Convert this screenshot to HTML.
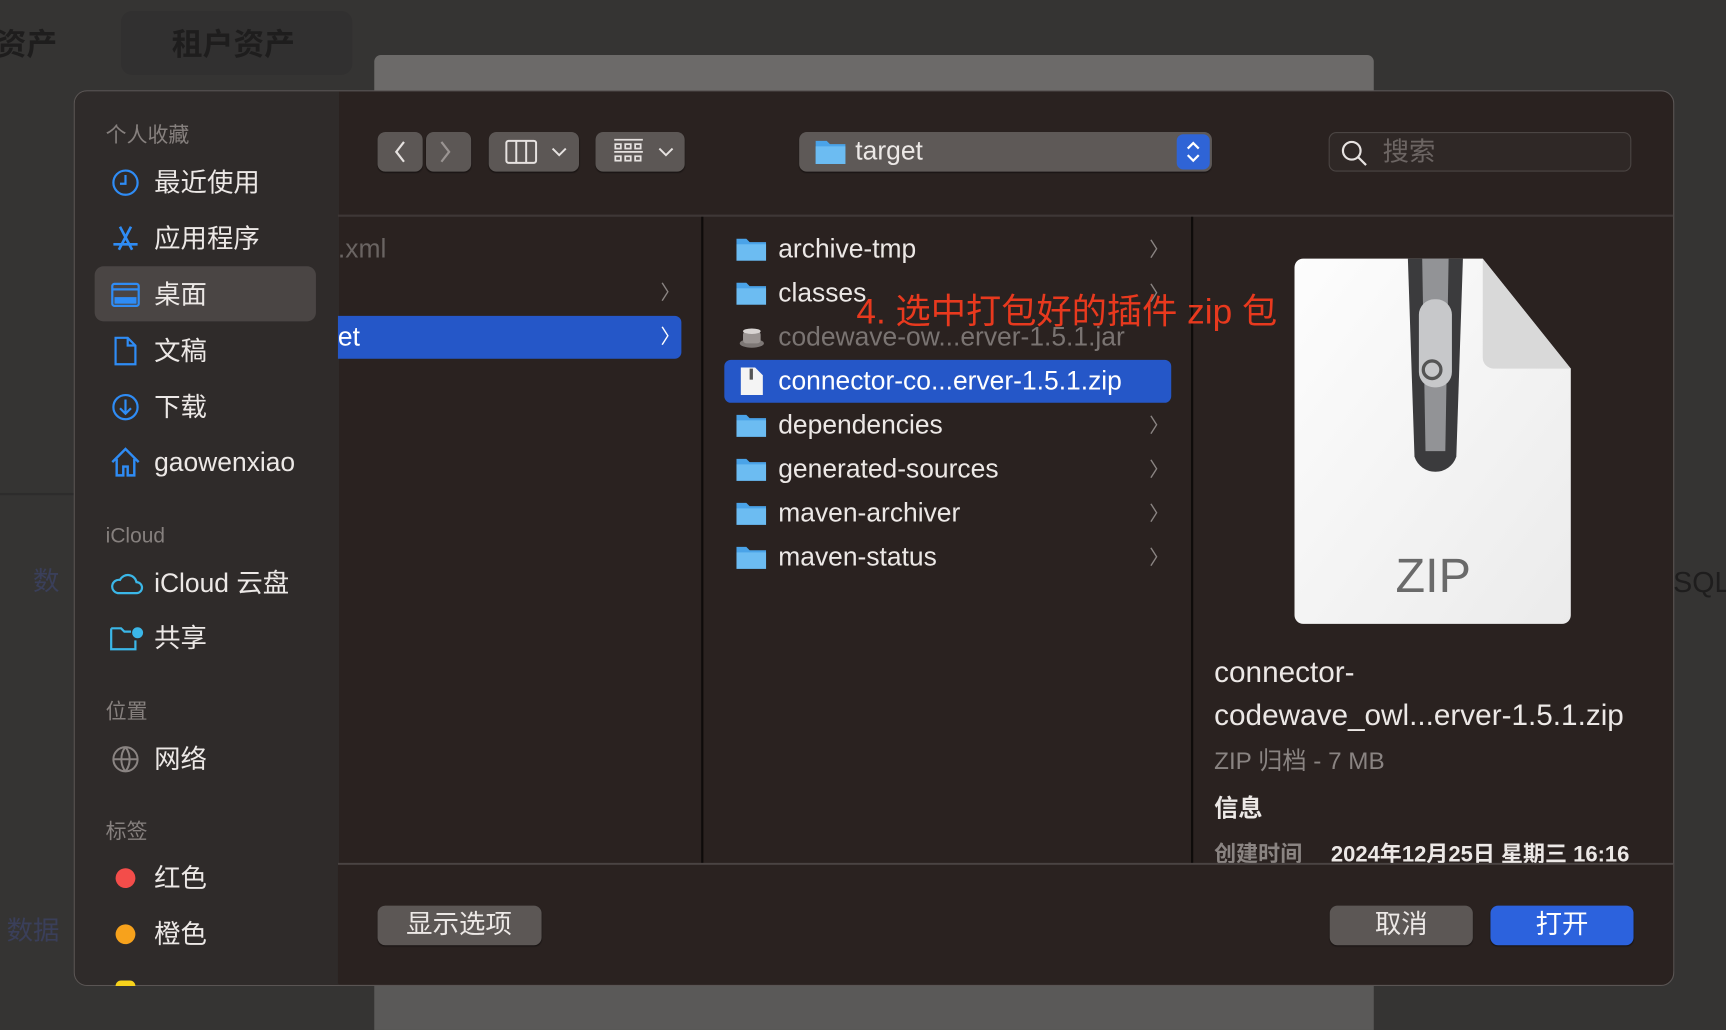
<!DOCTYPE html>
<html><head><meta charset="utf-8"><style>
*{margin:0;padding:0;box-sizing:border-box}
html,body{width:1726px;height:1030px;overflow:hidden;background:#353433}
#s{position:absolute;left:0;top:0;width:1568px;height:936px;transform:scale(1.10077,1.1004);transform-origin:0 0;font-family:"Liberation Sans","Noto Sans CJK SC",sans-serif;color:#e8e4e2}
.a{position:absolute}
.t{position:absolute;white-space:nowrap;line-height:1;margin-top:1px}
.hd{font-size:19px;color:#86807e}
.it{font-size:24px;color:#ece8e6;left:140px}
.btn{position:absolute;background:#5c5755;border-radius:7px;box-shadow:0 1px 1px rgba(0,0,0,.4)}
.row{position:absolute;left:670px;font-size:24px;color:#ece8e6}
.fold{position:absolute;left:669px;width:27px;height:22px}
.chev{position:absolute;left:1044px;font-size:18px;color:#8a8482}
</style></head><body><div id="s">
<div class="t" style="left:-4px;top:26px;font-size:28px;color:#1e1d1d;font-weight:bold">资产</div>
<div class="a" style="left:110px;top:10px;width:210px;height:58px;background:#313030;border-radius:10px"></div>
<div class="t" style="left:156px;top:26px;font-size:28px;color:#1e1d1d;font-weight:bold">租户资产</div>
<div class="a" style="left:340px;top:50px;width:908px;height:40px;background:#6c6a69;border-radius:6px 6px 0 0"></div>
<div class="a" style="left:340px;top:890px;width:908px;height:46px;background:#5a5958"></div>
<div class="a" style="left:0;top:448px;width:70px;height:2px;background:#2d2c2c"></div>
<div class="t" style="left:30px;top:516px;font-size:24px;color:#3a3f5a">数</div>
<div class="t" style="left:6px;top:834px;font-size:24px;color:#3a3f5a">数据</div>
<div class="t" style="left:1520px;top:515px;font-size:26px;color:#1e1d1d">SQL</div>
<div class="a" style="left:67px;top:82px;width:1454px;height:814px;background:#2a2220;border:1px solid #5a5554;border-radius:12px;overflow:hidden">
 <div class="a" style="left:0;top:0;width:240px;height:814px;background:#2f2b2a"></div>
</div>
<div class="t hd" style="left:96px;top:113px">个人收藏</div>
<div class="a" style="left:86px;top:242px;width:201px;height:50px;background:#4a4544;border-radius:8px"></div>
<svg class="a" style="left:100px;top:152px" width="28" height="28" viewBox="0 0 28 28" fill="none" stroke="#2f8cf5" stroke-width="2"><circle cx="14" cy="14" r="11"/><path d="M14 7v8h-5"/></svg>
<div class="t it" style="top:154px">最近使用</div>
<svg class="a" style="left:100px;top:203px" width="28" height="28" viewBox="0 0 28 28" fill="none" stroke="#2f8cf5" stroke-width="2.4"><path d="M9 3l11 21M19 3L8 24M3 19h22"/></svg>
<div class="t it" style="top:205px">应用程序</div>
<svg class="a" style="left:100px;top:255px" width="28" height="26" viewBox="0 0 28 26" fill="none" stroke="#2f8cf5" stroke-width="2"><rect x="2" y="3" width="24" height="20" rx="2"/><path d="M2 8h24"/><rect x="5" y="16" width="18" height="4" fill="#2f8cf5"/></svg>
<div class="t it" style="top:256px">桌面</div>
<svg class="a" style="left:103px;top:305px" width="22" height="28" viewBox="0 0 22 28" fill="none" stroke="#2f8cf5" stroke-width="2"><path d="M2 2h11l7 7v17H2z M13 2v7h7"/></svg>
<div class="t it" style="top:307px">文稿</div>
<svg class="a" style="left:100px;top:356px" width="28" height="28" viewBox="0 0 28 28" fill="none" stroke="#2f8cf5" stroke-width="2"><circle cx="14" cy="14" r="11"/><path d="M14 7v13M9 15l5 5 5-5"/></svg>
<div class="t it" style="top:358px">下载</div>
<svg class="a" style="left:99px;top:405px" width="30" height="30" viewBox="0 0 30 30" fill="none" stroke="#2f8cf5" stroke-width="2.2"><path d="M3 15L15 3l12 12M7 12v15h6v-8h4v8h6V12"/></svg>
<div class="t it" style="top:408px">gaowenxiao</div>
<div class="t hd" style="left:96px;top:477px">iCloud</div>
<svg class="a" style="left:99px;top:518px" width="32" height="24" viewBox="0 0 32 24" fill="none" stroke="#3bb7e8" stroke-width="2"><path d="M8 21h17a5 5 0 0 0 0-10 8 8 0 0 0-15-2 6 6 0 0 0-2 12z"/></svg>
<div class="t it" style="top:518px">iCloud 云盘</div>
<svg class="a" style="left:99px;top:567px" width="32" height="26" viewBox="0 0 32 26" fill="none" stroke="#3bb7e8" stroke-width="2"><path d="M2 4h9l3 3h6M2 4v19h22v-8"/><circle cx="26" cy="8" r="4" fill="#3bb7e8"/></svg>
<div class="t it" style="top:568px">共享</div>
<div class="t hd" style="left:96px;top:637px">位置</div>
<svg class="a" style="left:101px;top:677px" width="26" height="26" viewBox="0 0 26 26" fill="none" stroke="#8a8482" stroke-width="1.8"><circle cx="13" cy="13" r="11"/><path d="M2 13h22M13 2c-5 6-5 16 0 22M13 2c5 6 5 16 0 22"/></svg>
<div class="t it" style="top:678px">网络</div>
<div class="t hd" style="left:96px;top:746px">标签</div>
<div class="a" style="left:105px;top:789px;width:18px;height:18px;border-radius:50%;background:#f34d4a"></div>
<div class="t it" style="top:786px">红色</div>
<div class="a" style="left:105px;top:840px;width:18px;height:18px;border-radius:50%;background:#f7a21c"></div>
<div class="t it" style="top:837px">橙色</div>
<div class="a" style="left:105px;top:891px;width:18px;height:5px;border-radius:9px 9px 0 0;background:#f7d21c"></div>
<div class="btn" style="left:343px;top:120px;width:41px;height:36px"></div>
<div class="btn" style="left:387px;top:120px;width:41px;height:36px"></div>
<svg class="a" style="left:355px;top:126px" width="60" height="24" fill="none" stroke-width="2"><path d="M12 3l-7 9 7 9" stroke="#e6e2e0"/><path d="M46 3l7 9-7 9" stroke="#9a9492"/></svg>
<div class="btn" style="left:444px;top:120px;width:82px;height:36px"></div>
<svg class="a" style="left:458px;top:126px" width="62" height="24" fill="none" stroke="#e6e2e0" stroke-width="1.8"><rect x="2" y="2" width="27" height="20" rx="2"/><path d="M11 2v20M20 2v20M44 9l6 6 6-6"/></svg>
<div class="btn" style="left:541px;top:120px;width:81px;height:36px"></div>
<svg class="a" style="left:556px;top:124px" width="60" height="28" fill="none" stroke="#e6e2e0" stroke-width="1.6"><path d="M2 3h26M2 14h26"/><rect x="3" y="7" width="5" height="4"/><rect x="12" y="7" width="5" height="4"/><rect x="21" y="7" width="5" height="4"/><rect x="3" y="18" width="5" height="4"/><rect x="12" y="18" width="5" height="4"/><rect x="21" y="18" width="5" height="4"/><path d="M43 11l6 6 6-6" stroke-width="1.8"/></svg>
<div class="btn" style="left:726px;top:120px;width:375px;height:36px;background:#5e5957"></div>
<svg class="a" style="left:740px;top:125px" width="29" height="25"><path d="M1 3h10l3 3h14v18H1z" fill="#4aa3e8"/><rect x="1" y="8" width="27" height="16" fill="#6cbcf2"/></svg>
<div class="t" style="left:777px;top:125px;font-size:24px;color:#ece8e6">target</div>
<div class="a" style="left:1069px;top:122px;width:30px;height:32px;background:#2f64d6;border-radius:6px"></div>
<svg class="a" style="left:1075px;top:125px" width="18" height="26" fill="none" stroke="#fff" stroke-width="2"><path d="M4 10l5-5 5 5M4 16l5 5 5-5"/></svg>
<div class="a" style="left:1207px;top:120px;width:275px;height:36px;background:#2f2826;border:1px solid #4b4543;border-radius:7px"></div>
<svg class="a" style="left:1217px;top:126px" width="28" height="26" fill="none" stroke="#e6e2e0" stroke-width="2"><circle cx="11" cy="11" r="8"/><path d="M17 17l7 7"/></svg>
<div class="t" style="left:1256px;top:126px;font-size:24px;color:#6c6563">搜索</div>
<div class="a" style="left:307px;top:195px;width:1213px;height:2px;background:#3e3736"></div>
<div class="a" style="left:637px;top:197px;width:2px;height:588px;background:#0e0b0a"></div>
<div class="a" style="left:1082px;top:197px;width:2px;height:588px;background:#0e0b0a"></div>
<div class="t" style="left:307px;top:214px;font-size:24px;color:#6a6462">.xml</div>
<div class="chev t" style="left:600px;top:256px">〉</div>
<div class="a" style="left:307px;top:287px;width:312px;height:39px;background:#2557c8;border-radius:0 6px 6px 0"></div>
<div class="t" style="left:307px;top:294px;font-size:24px;color:#fff">et</div>
<div class="t" style="left:600px;top:296px;font-size:18px;color:#fff">〉</div>
<div class="a" style="left:658px;top:327px;width:406px;height:39px;background:#2557c8;border-radius:6px"></div>
<svg class="fold" style="top:215px"><path d="M0 2h9l3 3h15v17H0z" fill="#4aa3e8"/><rect x="0" y="7" width="27" height="15" fill="#6cbcf2"/></svg>
<div class="t row" style="left:707px;top:214px">archive-tmp</div><div class="t chev" style="top:217px">〉</div>
<svg class="fold" style="top:255px"><path d="M0 2h9l3 3h15v17H0z" fill="#4aa3e8"/><rect x="0" y="7" width="27" height="15" fill="#6cbcf2"/></svg>
<div class="t row" style="left:707px;top:254px">classes</div><div class="t chev" style="top:257px">〉</div>
<svg class="a" style="left:671px;top:295px" width="24" height="22"><ellipse cx="12" cy="17" rx="11" ry="4" fill="#7d7775"/><rect x="4" y="6" width="16" height="11" rx="3" fill="#9a9492"/><ellipse cx="12" cy="6" rx="8" ry="2.5" fill="#d8d4d2"/></svg>
<div class="t row" style="left:707px;top:294px;color:#7a7472">codewave-ow...erver-1.5.1.jar</div>
<svg class="a" style="left:672px;top:333px" width="22" height="27"><path d="M1 1h13l7 7v18H1z" fill="#f4f4f4"/><rect x="9" y="2" width="3" height="10" fill="#555"/></svg>
<div class="t row" style="left:707px;top:334px;color:#fff">connector-co...erver-1.5.1.zip</div>
<svg class="fold" style="top:375px"><path d="M0 2h9l3 3h15v17H0z" fill="#4aa3e8"/><rect x="0" y="7" width="27" height="15" fill="#6cbcf2"/></svg>
<div class="t row" style="left:707px;top:374px">dependencies</div><div class="t chev" style="top:377px">〉</div>
<svg class="fold" style="top:415px"><path d="M0 2h9l3 3h15v17H0z" fill="#4aa3e8"/><rect x="0" y="7" width="27" height="15" fill="#6cbcf2"/></svg>
<div class="t row" style="left:707px;top:414px">generated-sources</div><div class="t chev" style="top:417px">〉</div>
<svg class="fold" style="top:455px"><path d="M0 2h9l3 3h15v17H0z" fill="#4aa3e8"/><rect x="0" y="7" width="27" height="15" fill="#6cbcf2"/></svg>
<div class="t row" style="left:707px;top:454px">maven-archiver</div><div class="t chev" style="top:457px">〉</div>
<svg class="fold" style="top:495px"><path d="M0 2h9l3 3h15v17H0z" fill="#4aa3e8"/><rect x="0" y="7" width="27" height="15" fill="#6cbcf2"/></svg>
<div class="t row" style="left:707px;top:494px">maven-status</div><div class="t chev" style="top:497px">〉</div>
<div class="t" style="left:778px;top:266px;font-size:32px;color:#e8391e">4. 选中打包好的插件 zip 包</div>
<svg class="a" style="left:1176px;top:234px" width="252" height="334">
<defs><linearGradient id="g" x1="0" y1="0" x2="1" y2="1"><stop offset="0" stop-color="#fdfdfd"/><stop offset="1" stop-color="#ebebeb"/></linearGradient></defs>
<path d="M8 1h163l80 100v224a8 8 0 0 1-8 8H8a8 8 0 0 1-8-8V9a8 8 0 0 1 8-8z" fill="url(#g)"/>
<path d="M171 1v90a10 10 0 0 0 10 10h70z" fill="#d9d9d9"/>
<path d="M103 1h50l-6 180a20 20 0 0 1-38 0z" fill="#3b3b3d"/>
<path d="M116 1h24l-3 175h-18z" fill="#a9aaac" opacity=".8"/>
<rect x="113" y="38" width="30" height="80" rx="14" fill="#c7c8ca"/>
<circle cx="125" cy="102" r="8" fill="none" stroke="#555" stroke-width="3"/>
<text x="126" y="304" text-anchor="middle" font-family="Liberation Sans" font-size="44" fill="#6a6a6a">ZIP</text>
</svg>
<div class="t" style="left:1103px;top:597px;font-size:27px;color:#ece8e6">connector-</div>
<div class="t" style="left:1103px;top:636px;font-size:27px;color:#ece8e6">codewave_owl...erver-1.5.1.zip</div>
<div class="t" style="left:1103px;top:680px;font-size:22px;color:#8a8482">ZIP 归档 - 7 MB</div>
<div class="t" style="left:1103px;top:723px;font-size:22px;color:#ece8e6;font-weight:bold">信息</div>
<div class="t" style="left:1103px;top:766px;font-size:20px;color:#8a8482;font-weight:bold">创建时间</div>
<div class="t" style="left:1209px;top:766px;font-size:20px;color:#ece8e6;font-weight:bold">2024年12月25日 星期三 16:16</div>
<div class="a" style="left:307px;top:784px;width:1213px;height:110px;background:#2a2220;border-top:2px solid #4a4443;border-radius:0 0 12px 0"></div>
<div class="btn" style="left:343px;top:823px;width:149px;height:36px"></div>
<div class="t" style="left:369px;top:828px;font-size:24px;color:#ece8e6">显示选项</div>
<div class="btn" style="left:1208px;top:823px;width:130px;height:36px"></div>
<div class="t" style="left:1249px;top:828px;font-size:24px;color:#ece8e6">取消</div>
<div class="btn" style="left:1354px;top:823px;width:130px;height:36px;background:#2c62dd"></div>
<div class="t" style="left:1395px;top:828px;font-size:24px;color:#fff">打开</div>
</div></body></html>
